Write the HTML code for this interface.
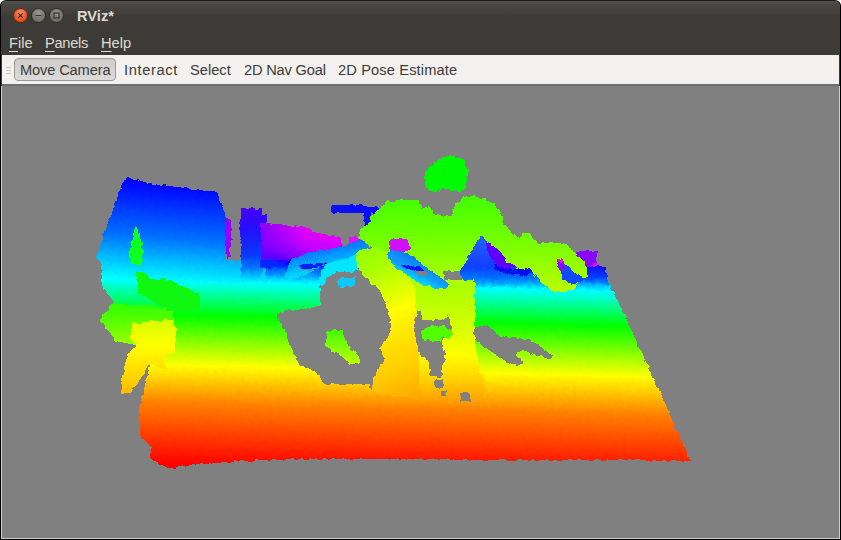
<!DOCTYPE html>
<html><head><meta charset="utf-8"><title>RViz*</title>
<style>
html,body{margin:0;padding:0;}
body{width:841px;height:540px;overflow:hidden;background:#fff;position:relative;font-family:"Liberation Sans",sans-serif;}
#win{position:absolute;left:0;top:0;width:841px;height:540px;background:#3c3b37;overflow:hidden;border-radius:6px 6px 0 0;box-sizing:border-box;border:1px solid #000;border-top-color:#1c1b19;}
#title{position:absolute;left:0;top:0;width:839px;height:29px;background:linear-gradient(#53524d 0px,#484743 4px,#403f3b 13px,#3c3b37 15px,#3c3b37 29px);}
#title .t{position:absolute;left:76px;top:6px;font-size:14.67px;font-weight:bold;color:#dfdbd2;line-height:18px;white-space:nowrap;}
.wb{position:absolute;top:7px;width:15px;height:15px;border-radius:50%;box-sizing:border-box;}
.wb svg{position:absolute;left:-1px;top:-1px;}
#menu{position:absolute;left:0;top:29px;width:839px;height:25px;background:#3c3b37;}
#menu span{position:absolute;top:5px;font-size:14.67px;color:#dfdbd2;line-height:17px;white-space:nowrap;}
#menu u{text-decoration:underline;text-underline-offset:3px;text-decoration-thickness:1px;}
#tool{position:absolute;left:1px;top:54px;width:837px;height:29px;background:#f2f1f0;}
#tool span{position:absolute;top:7px;font-size:14.67px;color:#3c3b37;line-height:17px;white-space:nowrap;}
#btn{position:absolute;left:12px;top:3px;width:102px;height:23px;box-sizing:border-box;border:1px solid #9b9994;border-radius:4px;background:linear-gradient(#cdccc9,#dcdbd9);}
.grip{position:absolute;left:4px;width:5px;height:1px;background:#cbc9c5;}
#sep{position:absolute;left:1px;top:83px;width:837px;height:2px;background:#6f6f6f;}
#view{position:absolute;left:1px;top:85px;width:837px;height:452px;background:#808080;}
#lb{position:absolute;left:0;top:85px;width:839px;height:453px;box-sizing:border-box;border:1px solid #cfcbc4;border-top:none;}
svg.pc{position:absolute;left:-1px;top:-1px;}
</style></head><body>
<div id="win">
<div id="title">
 <div class="wb" style="left:12px;background:radial-gradient(circle at 50% 30%,#f79272,#eb5a24 55%,#cf4512);border:1px solid #6e2a11;"><svg width="15" height="15" viewBox="0 0 15 15"><path d="M5.2 5.2 L9.8 9.8 M9.8 5.2 L5.2 9.8" stroke="#4a1a08" stroke-width="1.1" fill="none"/></svg></div>
 <div class="wb" style="left:30px;background:radial-gradient(circle at 50% 30%,#98978f,#77766f 55%,#64635d);border:1px solid #2c2b28;"><svg width="15" height="15" viewBox="0 0 15 15"><path d="M4.5 7.5 L10.5 7.5" stroke="#33322e" stroke-width="1.1" fill="none"/></svg></div>
 <div class="wb" style="left:48px;background:radial-gradient(circle at 50% 30%,#98978f,#77766f 55%,#64635d);border:1px solid #2c2b28;"><svg width="15" height="15" viewBox="0 0 15 15"><rect x="5" y="5" width="5" height="5" stroke="#33322e" stroke-width="1.2" fill="none"/></svg></div>
 <div class="t">RViz*</div>
</div>
<div id="menu"><span style="left:8px"><u>F</u>ile</span><span style="left:44px;letter-spacing:-0.3px"><u>P</u>anels</span><span style="left:100px"><u>H</u>elp</span></div>
<div id="tool"><div class="grip" style="top:12px"></div><div class="grip" style="top:15px"></div><div class="grip" style="top:18px"></div><div id="btn"></div>
<span style="left:18px;letter-spacing:-0.15px">Move Camera</span><span style="left:122px;letter-spacing:0.62px">Interact</span><span style="left:188px">Select</span><span style="left:242px;letter-spacing:-0.2px">2D Nav Goal</span><span style="left:336px;letter-spacing:0.12px">2D Pose Estimate</span></div>
<div id="sep"></div>
<div id="view"></div>
<div id="lb"></div>
<svg class="pc" width="841" height="540" viewBox="0 0 841 540" shape-rendering="crispEdges">
<defs>
<filter id="rough" x="0" y="0" width="841" height="540" filterUnits="userSpaceOnUse" color-interpolation-filters="sRGB">
 <feTurbulence type="fractalNoise" baseFrequency="0.22" numOctaves="1" seed="7" result="n"/>
 <feDisplacementMap in="SourceGraphic" in2="n" scale="5" xChannelSelector="R" yChannelSelector="G"/>
</filter>
<linearGradient id="gf" gradientUnits="userSpaceOnUse" x1="400" y1="200" x2="392.5" y2="500">
 <stop offset="0.09" stop-color="#f0f"/>
 <stop offset="0.15" stop-color="#c000ff"/>
 <stop offset="0.2167" stop-color="#00f"/>
 <stop offset="0.2867" stop-color="#0ff"/>
 <stop offset="0.4017" stop-color="#0f0"/>
 <stop offset="0.5683" stop-color="#ff0"/>
 <stop offset="0.695" stop-color="#ff8000"/>
 <stop offset="0.90" stop-color="#f00"/>
</linearGradient>
<linearGradient id="gbox" gradientUnits="userSpaceOnUse" x1="170" y1="183" x2="163" y2="282">
 <stop offset="0" stop-color="#0000ff"/>
 <stop offset="0.55" stop-color="#0070ff"/>
 <stop offset="0.85" stop-color="#00d0ff"/>
 <stop offset="1" stop-color="#00ffff"/>
</linearGradient>
<linearGradient id="glb" gradientUnits="userSpaceOnUse" x1="140" y1="320" x2="140" y2="393">
 <stop offset="0" stop-color="#d8ff00"/>
 <stop offset="0.35" stop-color="#ffff00"/>
 <stop offset="0.7" stop-color="#ffdc00"/>
 <stop offset="1" stop-color="#ffbc00"/>
</linearGradient>
<linearGradient id="glbg" gradientUnits="userSpaceOnUse" x1="140" y1="302" x2="140" y2="345">
 <stop offset="0" stop-color="#28ff00"/>
 <stop offset="0.5" stop-color="#60ff00"/>
 <stop offset="1" stop-color="#98ff00"/>
</linearGradient>
<linearGradient id="gband" gradientUnits="userSpaceOnUse" x1="325" y1="248" x2="330" y2="272">
 <stop offset="0" stop-color="#1070ff"/><stop offset="0.5" stop-color="#00a8ff"/><stop offset="1" stop-color="#00e8ff"/>
</linearGradient>
<linearGradient id="gunder" gradientUnits="userSpaceOnUse" x1="0" y1="236" x2="0" y2="288">
 <stop offset="0" stop-color="#2860ff"/><stop offset="0.6" stop-color="#1040ff"/><stop offset="0.8" stop-color="#0070ff"/><stop offset="0.91" stop-color="#00a8ff"/><stop offset="1" stop-color="#00f8ff"/>
</linearGradient>
<linearGradient id="glt" gradientUnits="userSpaceOnUse" x1="368" y1="250" x2="420" y2="397">
 <stop offset="0" stop-color="#98ff00"/><stop offset="0.12" stop-color="#a8ff00"/><stop offset="0.26" stop-color="#d0ff00"/><stop offset="0.42" stop-color="#ffff00"/><stop offset="0.6" stop-color="#ffe400"/><stop offset="0.8" stop-color="#ffcc00"/><stop offset="1" stop-color="#ffa800"/>
</linearGradient>
<linearGradient id="grl" gradientUnits="userSpaceOnUse" x1="0" y1="285" x2="0" y2="397">
 <stop offset="0" stop-color="#a8ff00"/><stop offset="0.4" stop-color="#d8ff00"/><stop offset="0.62" stop-color="#ffff00"/><stop offset="0.85" stop-color="#ffd000"/><stop offset="1" stop-color="#ffa800"/>
</linearGradient>
<linearGradient id="gband2" gradientUnits="userSpaceOnUse" x1="425" y1="262" x2="415" y2="282">
 <stop offset="0" stop-color="#1078ff"/><stop offset="0.6" stop-color="#10a0ff"/><stop offset="1" stop-color="#00e0ff"/>
</linearGradient>
<linearGradient id="gpil" gradientUnits="userSpaceOnUse" x1="0" y1="207" x2="0" y2="283">
 <stop offset="0" stop-color="#4800ff"/><stop offset="0.3" stop-color="#2410ff"/><stop offset="0.63" stop-color="#0838ff"/><stop offset="0.8" stop-color="#0078ff"/><stop offset="1" stop-color="#00ffff"/>
</linearGradient>
<linearGradient id="gmag" gradientUnits="userSpaceOnUse" x1="303" y1="224" x2="290" y2="267">
 <stop offset="0" stop-color="#ec00ff"/><stop offset="0.45" stop-color="#c400ff"/><stop offset="0.75" stop-color="#8800ff"/><stop offset="0.92" stop-color="#3000ff"/><stop offset="1" stop-color="#0028ff"/>
</linearGradient>
<linearGradient id="gmag2" gradientUnits="userSpaceOnUse" x1="262" y1="0" x2="305" y2="0">
 <stop offset="0" stop-color="#7800ff" stop-opacity="0.75"/><stop offset="1" stop-color="#7800ff" stop-opacity="0"/>
</linearGradient>
<linearGradient id="gbp" gradientUnits="userSpaceOnUse" x1="0" y1="266" x2="0" y2="288">
 <stop offset="0" stop-color="#1010ff"/><stop offset="0.5" stop-color="#0838ff"/><stop offset="0.8" stop-color="#0090ff"/><stop offset="1" stop-color="#00f0ff"/>
</linearGradient>
<linearGradient id="gblob" x1="0" y1="0" x2="0" y2="1">
 <stop offset="0" stop-color="#40ff00"/><stop offset="1" stop-color="#c0ff00"/>
</linearGradient>
<linearGradient id="gh" gradientUnits="userSpaceOnUse" x1="0" y1="195" x2="0" y2="397">
 <stop offset="0" stop-color="#40ff00"/>
 <stop offset="0.27" stop-color="#80ff00"/>
 <stop offset="0.47" stop-color="#b8ff00"/>
 <stop offset="0.62" stop-color="#f0ff00"/>
 <stop offset="0.75" stop-color="#fff000"/>
 <stop offset="1" stop-color="#ffb800"/>
</linearGradient>
<radialGradient id="gthigh">
 <stop offset="0" stop-color="#ffe800" stop-opacity="1"/>
 <stop offset="0.6" stop-color="#fff000" stop-opacity="0.8"/>
 <stop offset="1" stop-color="#ffff00" stop-opacity="0"/>
</radialGradient>
</defs>
<g filter="url(#rough)">
<polygon points="100,262 228,262 242,262 262,262 263,226 265,224 290,227 315,232.5 340,237.5 341,247.5 365,250 480,240 520,262 576,262 576,252 597,252 597,265 606,268 607,280 625,316 652,375 691,461 600,460 500,460 400,459 300,459 240,461 190,465 172,468 166,467.5 150,459 151,447.5 140,435 139,410 144,390 150,364 140,380 130,393 121,392.5 122.5,375 127.5,355 136,345 115,341 107.5,330 100,320 105,312.5 114,302.5 102.5,287.5 101,265" fill="url(#gf)"/>
<polygon points="290,310 305,309 321,305 321.5,292.5 320,287 328,277 337,272 347,272.5 357,271 364,270 372,280 382,288 388,296 390,302.5 395,315 396,330 391,340 386,347.5 389,360 381,372.5 377.5,384 371,390 370,384 324,384 315,371 300,365 290,346 285,330 277,318 280,312" fill="#808080"/>
<polygon points="473.75,327.5 487.5,325 500,336 512.5,337.5 530,340 540,346 552.5,356 550,359 539,356 532.5,355 525,351 517.5,351 515,356 524,361 522.5,365 510,364 500,357.5 487.5,349 476,341 472.5,336" fill="#808080"/>
<polygon points="127.5,177 133.75,179.5 155,184.25 177.5,187 197.5,190 213.75,191.5 218.75,195 222.5,205 226,217.5 226,260 231,261 241.25,261 266,262 266,283 102.5,281 101,265 97,257.5 100,247.5 103.75,232.5 110,217.5 117.5,197.5 123.75,181" fill="url(#gbox)"/>
<polygon points="226,218 231,221 231.6,240 229,250 231,257 227,259 225,240" fill="#9800ff"/>
<polygon points="241.5,208.5 243,207.4 262,209 262,214 267,214.5 267,223 262,224 262,283 240,283 241.5,260 240.5,240 240,225" fill="url(#gpil)"/>
<polygon points="261,223.5 265,222.8 282,225 309.6,228 314,233.6 340.5,238 342,246 330,249 315,251 302,255 290,259 285,263 280,267 261,268" fill="url(#gmag)"/>
<polygon points="261,223.5 265,222.8 282,225 305,227.5 305,254 290,259 285,260 261,260" fill="url(#gmag2)"/>
<polygon points="113.75,302.5 127.5,305 150,305 172.5,310 173.75,320 152.5,321 132.5,323.75 130,337.5 136,345 115,341 107.5,330 100,320 105,312.5" fill="url(#glbg)"/>
<polygon points="132.5,323.75 152.5,321 173.75,320 176,330 175,352.5 165,356 166,370 150,364 140,380 130,392.5 121,392.5 122.5,375 127.5,355 136,345 130,337.5" fill="url(#glb)"/>
<polygon points="134,227 138,227 142,245 144,262 140,265 131,264 129,255 132,240" fill="#10ff20"/>
<polygon points="136,272 142,272 150,278 170,280 186,288 200,295 200,310 172,312 150,300 138,292" fill="#10f810"/>
<polygon points="327.5,331 341,330 349,347.5 359,356 359,364 350,364 340,355 325,346" fill="url(#gblob)"/>
<polygon points="331,206 336,204.5 379,206 379,213 371,213 371,228 364,228 364,213 334,213.5 331,211" fill="#0a10ff"/>
<polygon points="318,282 322,270 327,263 338,261.5 348,258 358,253 358,269 360,272 357,271 347,272.5 337,272 328,277 322,287" fill="#00e6ff"/>
<polygon points="290,259 302,255 315,251 330,249 342,246.5 353,242.5 360,238.5 370,247.5 373,249 370,248.5 363,250 358,253 348,258 338,261.5 327,263 315,270 308,273 300,276 290,280 285,277" fill="url(#gband)"/>
<polygon points="300,265 326,262.5 317,268 301,269" fill="#0020ff"/>
<polygon points="302,269 315,268.5 315,270 302,270.5" fill="#808080"/>
<polygon points="349,237 358,236 360,238.5 353,242.5 349,245" fill="#e010ff"/>
<polygon points="337.5,279 345,278 356,277 355,285 348,287.5 340,287" fill="#10c8ff"/>
<polygon points="480,236 487.5,242.5 499,252.5 507.5,262.5 515,266 525,270 540,278 545,286 500,287 475,288 470,280 468,265 470,255" fill="url(#gunder)"/>
<polygon points="450,155 465,160 468,172.5 466,186 460,193 452.5,190 446,189 440,190 434,192.5 426,187.5 424,177.5 426,170 435,162.5 442.5,158" fill="#00fa00"/>
<polygon points="386,201 420,199.5 421,209 429,206 435,215 450,216 456,204 465,196 477.5,196 494,202.5 501,212.5 502.5,222.5 512.5,232.5 520,239 522.6,233 527.8,233 533,237 538,243 546,242 559,243 568,245.5 572,250.7 577,254.6 583.5,261 587.4,269 587.4,276.7 583.5,277.3 580,283 575,287.7 571.8,291 562.8,292 553.7,292 547.2,287 540.7,281.9 538.8,278 533,274 531.7,269.5 525.2,268.2 520,270.8 515,266 507.5,262.5 499,252.5 487.5,242.5 480,236 470,255 467.5,265 472.5,276 475,285 475,315 474,327.5 475,340 480,372.5 485,385 484,397 440,397 400,397 371,392 372.5,384 376,372.5 384,360 380,347.5 386,340 391,330 390,315 385,302.5 380,290 372.5,285 365,277.5 362.5,270 356,267.5 357.5,257.5 362,251.5 374,249 365,242.5 359,236 360,229 371,222.5 370,217.5 377.5,210" fill="url(#gh)"/>
<polygon points="561.5,258 564,262.4 565.4,265 570,265.6 571.2,270.2 575.7,273.4 583.5,277.3 580,283 573,284.4 566.7,281.2 561.5,279.3 562.8,275.4 561.5,270.2 557,266.3 558.2,259.2" fill="#1048ff"/>
<polygon points="558.2,259.2 561.5,258 564,262.4 565.4,265 566,268 561.5,270.2 557,266.3" fill="#8010f8"/>
<polygon points="558.5,259.2 561.5,258 563.5,262 560,263.5" fill="#e010f0"/>
<polygon points="355.5,260 357,253 361,249.5 372.5,247.5 387.5,252.5 395,265 410,280 415,287.5 416,312.5 415,320 417.5,330 419,365 419,397 371,392 377.5,384 376,372.5 384,360 380,347.5 386,340 391,330 390,315 385,302.5 380,290 370,282.5 362.5,275 357.5,267.5" fill="url(#glt)"/>
<polygon points="416,287.5 445,285 475,285 475,315 474,327.5 475,340 480,372.5 485,385 484,397 419,397 419,365 417.5,330 415,320 416,312.5" fill="url(#grl)"/>
<polygon points="390,240 398,237.5 408,240 410,250 400,252.5 390,250" fill="#d010ff"/>
<polygon points="390,250 410,254 420,262.5 430,270 440,277.5 450,284 445,289 435,287.5 420,284 407.5,275 395,267.5 387.5,257.5" fill="url(#gband2)"/>
<polygon points="400,265 420,266 425,272 410,271" fill="#0818ff"/>
<polygon points="415,270 427.5,271 427,276 418,275" fill="#808080"/>
<polygon points="480,235 490,245 500,255 500,285 475,285 474,280 462.5,280 460,271 465,262.5 470,255 475,245" fill="url(#gunder)"/>
<polygon points="442.5,271 460,271 462.5,280 445,280" fill="#808080"/>
<polygon points="486,242.5 494,246 500,252.5 507.5,262.5 515,266 510,269 500,267.5 492.5,260 487.5,252.5" fill="#6000ff"/>
<polygon points="492,262 500,267.5 510,269 520,268 530,272 528,276 510,275 495,270" fill="#0010f0"/>
<polygon points="417.5,311 421,312.5 422.5,320 444,320 447.5,316 451,322.5 452.5,335 444,339 441,344 446,352.5 444,362.5 441,377.5 435,376 430,376 429,362.5 424,357.5 419,356 417.5,345 414,330 415,320" fill="#808080"/>
<polygon points="421,331 430,326 444,326 452.5,331 451,337.5 444,337.5 440,341 430,341 422.5,339" fill="#50ff00"/>
<polygon points="435,379 442.5,379 442.5,387.5 435,387.5" fill="#808080"/>
<polygon points="441,391 446,391 446,396 441,396" fill="#808080"/>
<polygon points="460,392.5 470,392.5 470,401 460,401" fill="#808080"/>
<polygon points="575.7,252 584.8,250.7 597,252 597,262.4 599,266 590,268 587.4,267.6 583.5,261 577,254.6" fill="#8808ff"/>
<polygon points="590.6,264 597,262.4 599,266 593,267" fill="#e010f0"/>
<polygon points="587.4,267.6 597.8,265.6 604.3,267.6 606.6,272.8 607,279.3 609.4,284.4 611,288 600,288 590,284 584,282 587.4,276.7" fill="url(#gbp)"/>
</g>
</svg>
</div>
</body></html>
